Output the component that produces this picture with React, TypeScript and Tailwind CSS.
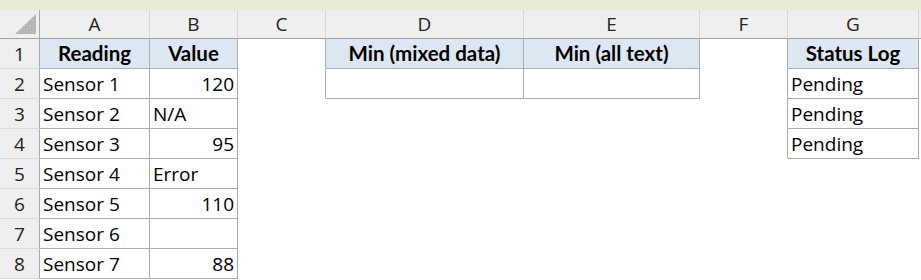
import React from "react";

type Cell = { t?: string; hdr?: boolean; right?: boolean };

const COLS = ["A", "B", "C", "D", "E", "F", "G", "H"];

const data: Record<number, Record<string, Cell>> = {
  1: {
    A: { t: "Reading", hdr: true },
    B: { t: "Value", hdr: true },
    D: { t: "Min (mixed data)", hdr: true },
    E: { t: "Min (all text)", hdr: true },
    G: { t: "Status Log", hdr: true },
  },
  2: { A: { t: "Sensor 1" }, B: { t: "120", right: true }, D: {}, E: {}, G: { t: "Pending" } },
  3: { A: { t: "Sensor 2" }, B: { t: "N/A" }, G: { t: "Pending" } },
  4: { A: { t: "Sensor 3" }, B: { t: "95", right: true }, G: { t: "Pending" } },
  5: { A: { t: "Sensor 4" }, B: { t: "Error" } },
  6: { A: { t: "Sensor 5" }, B: { t: "110", right: true } },
  7: { A: { t: "Sensor 6" }, B: {} },
  8: { A: { t: "Sensor 7" }, B: { t: "88", right: true } },
};

const bordered = (r: number, c: string) => {
  if (c === "A" || c === "B") return r >= 1 && r <= 8;
  if (c === "D" || c === "E") return r >= 1 && r <= 2;
  if (c === "G") return r >= 1 && r <= 4;
  return false;
};

const nextCol = (c: string) => COLS[COLS.indexOf(c) + 1];

export default function App() {
  const rows = [1, 2, 3, 4, 5, 6, 7, 8];
  return (
    <div className="w-[921px] h-[280px] overflow-hidden bg-white [font-family:'Open_Sans',sans-serif] text-black">
      <div className="h-[10px] bg-[#EDEADB]" />
      <div className="grid grid-cols-[40px_110px_88px_88px_198px_176px_88px_131px_1fr]">
        {/* column header row */}
        <div className="h-[29px] bg-[#EFEFEF] border-r border-r-[#A8A8A8] border-b border-b-[#A0A0A0] flex items-end justify-end pr-[3px] pb-[4px]">
          <svg width="21" height="20" viewBox="0 0 21 20">
            <defs>
              <pattern id="dots" width="3" height="3" patternUnits="userSpaceOnUse">
                <rect width="3" height="3" fill="#B8B8B8" />
                <rect x="1" y="1" width="1" height="1" fill="#A8A8A8" />
              </pattern>
            </defs>
            <polygon points="21,0 21,20 0,20" fill="url(#dots)" />
          </svg>
        </div>
        {COLS.map((c) => (
          <div
            key={c}
            className="h-[29px] bg-[#EFEFEF] border-r border-r-[#D6D6D6] border-b border-b-[#A0A0A0] flex items-end justify-center pb-[1px] text-[19px] leading-[26px] text-[#222]"
          >
            {c === "H" ? "" : c}
          </div>
        ))}
        {rows.map((r) => (
          <React.Fragment key={r}>
            <div className="h-[30px] bg-[#EFEFEF] border-r border-r-[#A8A8A8] border-b border-b-[#DADADA] flex items-center justify-center text-[19px] leading-[26px] text-[#222]">
              {r}
            </div>
            {COLS.map((c) => {
              const cell = data[r]?.[c];
              const b = bordered(r, c);
              const nb = nextCol(c) ? bordered(r, nextCol(c)) : false;
              const db = bordered(r + 1, c);
              const rightB = b || nb;
              const botB = b || db;
              const hdr = cell?.hdr;
              return (
                <div
                  key={c}
                  className={`h-[30px] border-r border-b flex items-center px-[3px] whitespace-nowrap overflow-hidden ${
                    rightB ? "border-r-[#ABABAB]" : "border-r-transparent"
                  } ${botB ? "border-b-[#ABABAB]" : "border-b-transparent"} ${
                    hdr
                      ? "bg-[#DDE7F1] [font-family:Lato,sans-serif] font-bold text-[20.5px] justify-center"
                      : "bg-white text-[19px] leading-[26px]"
                  } ${cell?.right ? "justify-end" : ""}`}
                >
                  {cell?.t ?? ""}
                </div>
              );
            })}
          </React.Fragment>
        ))}
      </div>
    </div>
  );
}
